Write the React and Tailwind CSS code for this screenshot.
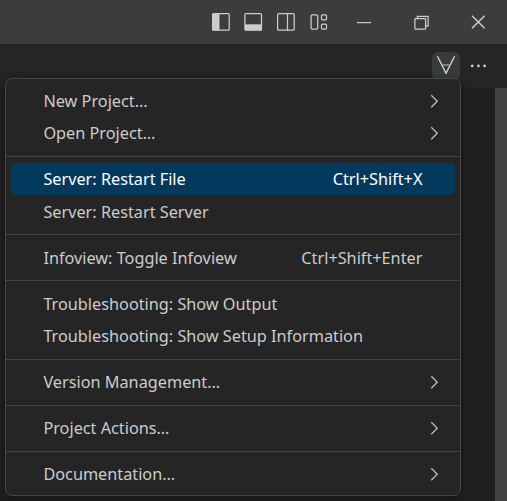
import React from "react";

const groups = [
  [{ label: "New Project…", sub: true }, { label: "Open Project…", sub: true }],
  [
    { label: "Server: Restart File", keys: "Ctrl+Shift+X", active: true },
    { label: "Server: Restart Server" },
  ],
  [{ label: "Infoview: Toggle Infoview", keys: "Ctrl+Shift+Enter" }],
  [
    { label: "Troubleshooting: Show Output" },
    { label: "Troubleshooting: Show Setup Information" },
  ],
  [{ label: "Version Management…", sub: true }],
  [{ label: "Project Actions…", sub: true }],
  [{ label: "Documentation…", sub: true }],
];

function Chevron() {
  return (
    <svg className="mr-[15px] h-5 w-3" viewBox="0 0 12 20" fill="none" stroke="#bdbdbd" strokeWidth="1.3">
      <path d="M3.3 4.2 9.2 10.2 3.3 16.2" />
    </svg>
  );
}

function MenuItem({ label, keys, sub, active }) {
  return (
    <div
      className={
        active
          ? "mx-[5px] mb-[0.5px] flex h-8 items-center justify-between rounded-[5px] bg-[#04395e] pl-[32.4px] text-white"
          : "mx-[5px] flex h-[32.5px] items-center justify-between pl-[32.4px] text-[#cccccc]"
      }
    >
      <span>{label}</span>
      {keys && <span className="mr-[32.6px]">{keys}</span>}
      {sub && <Chevron />}
    </div>
  );
}

function TitleBar() {
  return (
    <div className="h-11 bg-[#3c3c3c]">
      <svg className="block" width="507" height="44" viewBox="0 0 507 44" fill="none" stroke="#cccccc" strokeWidth="1.25">
        <g>
          <rect x="212.6" y="13.6" width="16.6" height="16.6" rx="1" />
          <path d="M212.5 13.5h7v17h-7z" fill="#cccccc" stroke="none" />
        </g>
        <g>
          <rect x="244.9" y="13.6" width="16.6" height="16.6" rx="1" />
          <path d="M245 24.3h17v6h-17z" fill="#cccccc" stroke="none" />
        </g>
        <g>
          <rect x="277.6" y="13.6" width="16.6" height="16.6" rx="1" />
          <path d="M287.5 13.5v17" />
        </g>
        <g>
          <rect x="311.1" y="14.8" width="6.6" height="14.2" rx="1" />
          <rect x="321.5" y="14.8" width="5" height="5" rx="1" />
          <rect x="321.5" y="24" width="5" height="5" rx="1" />
        </g>
        <path d="M357 22.6h14" />
        <path d="M417.4 18.1V16.4h10.7v9.6h-2.2" />
        <rect x="414.9" y="18.5" width="10.7" height="10.5" rx="0.5" />
        <path d="M472 15.7 484.6 28.3M484.6 15.7 472 28.3" strokeWidth="1.5" />
      </svg>
    </div>
  );
}

export default function App() {
  return (
    <div className="relative flex h-[501px] w-[507px] flex-col overflow-hidden bg-[#1f1f1f] font-['Noto_Sans',sans-serif] text-[16.25px] leading-6">
      <TitleBar />
      <div className="flex h-11 items-start bg-[#252526] pt-2 pl-[432px]">
        <div className="h-7 w-7 rounded-[6px] bg-[#383b3b]">
          <svg width="28" height="28" viewBox="0 0 28 28" fill="none" stroke="#d8d8d8" strokeWidth="1.3">
            <path d="M5.4 4.2 14 21.3 22.6 4.2" />
            <path d="M9.7 13h8.6" stroke="#a5a5a5" />
          </svg>
        </div>
        <svg className="ml-2.5" width="20" height="28" viewBox="0 0 20 28" fill="#d0d0d0">
          <circle cx="2.2" cy="13.9" r="1.35" />
          <circle cx="8.4" cy="13.9" r="1.35" />
          <circle cx="14.6" cy="13.9" r="1.35" />
        </svg>
      </div>
      <div className="flex flex-1 justify-end">
        <div className="w-3 bg-[#424242]" />
      </div>

      <div className="absolute top-[78px] left-[5px] h-[418px] w-[456px] rounded-[7px] border border-[#454545] bg-[#252526] pt-[5.65px] shadow-[0_2px_10px_rgba(0,0,0,0.36)]">
        {groups.map((items, i) => (
          <React.Fragment key={i}>
            {i > 0 && <div className="my-[6.25px] h-px bg-[#454545]" />}
            {items.map((item) => (
              <MenuItem key={item.label} {...item} />
            ))}
          </React.Fragment>
        ))}
      </div>
    </div>
  );
}
